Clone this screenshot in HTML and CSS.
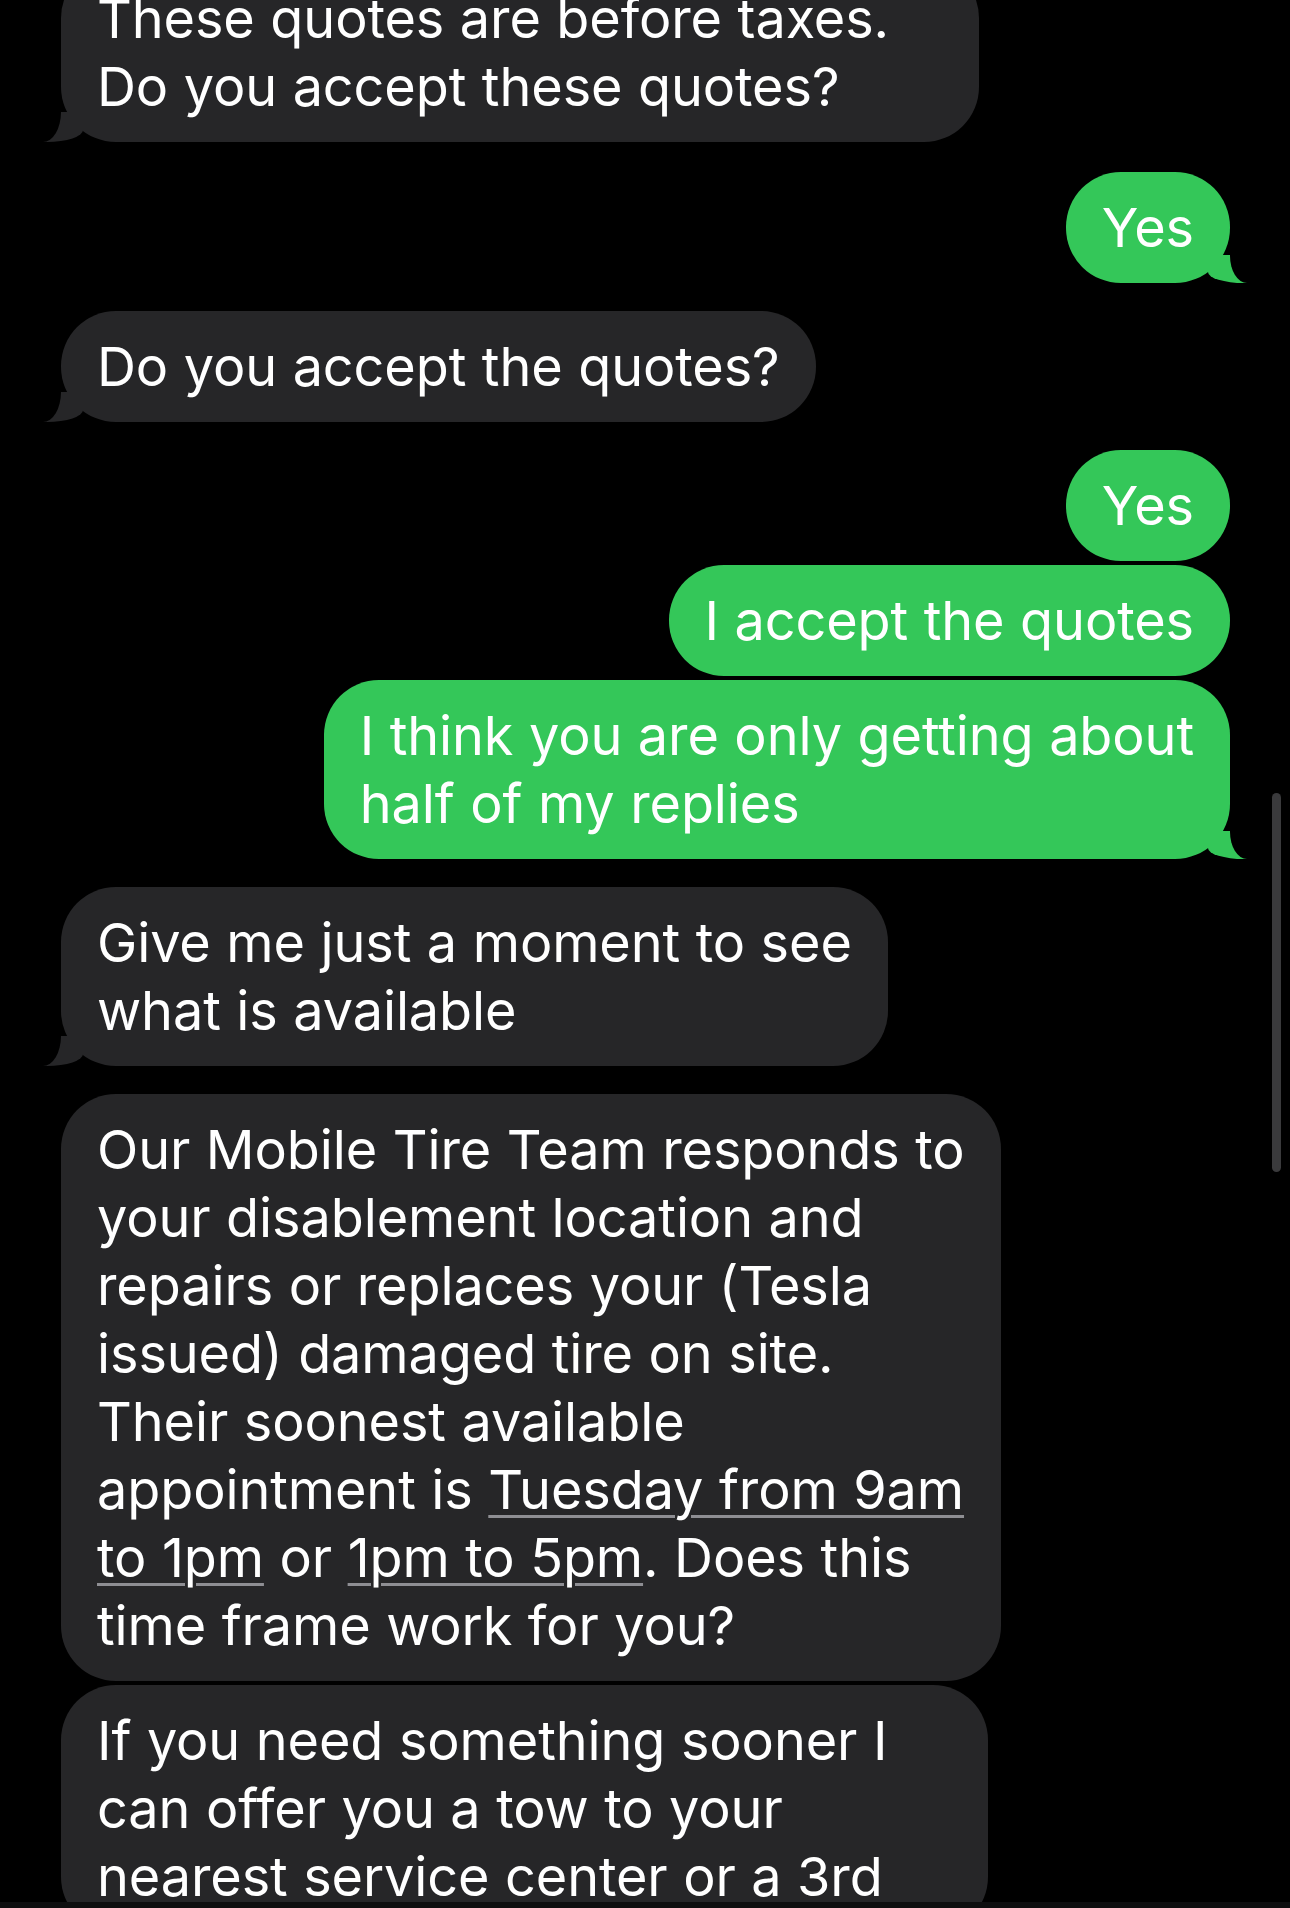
FILE: index.html
```html
<!DOCTYPE html>
<html lang="en">
<head>
<meta charset="utf-8">
<title>Messages</title>
<link rel="stylesheet" href="styles.css">
</head>
<body>
<main class="thread">
  <div class="msg recv tail wide">These quotes are before taxes.<br>Do you accept these quotes?</div>
  <div class="msg sent tail first">Yes</div>
  <div class="msg recv tail new">Do you accept the quotes?</div>
  <div class="msg sent new">Yes</div>
  <div class="msg sent">I accept the quotes</div>
  <div class="msg sent tail">I think you are only getting about<br>half of my replies</div>
  <div class="msg recv tail new">Give me just a moment to see<br>what is available</div>
  <div class="msg recv new">Our Mobile Tire Team responds to<br>your disablement location and<br>repairs or replaces your (Tesla<br>issued) damaged tire on site.<br>Their soonest available<br>appointment is <span class="link">Tuesday from 9am<br>to 1pm</span> or <span class="link">1pm to 5pm</span>. Does this<br>time frame work for you?</div>
  <div class="msg recv wider">If you need something sooner I<br>can offer you a tow to your<br>nearest service center or a 3rd</div>
</main>
<div class="scrollbar"></div>
<div class="bottom-edge"></div>
</body>
</html>
```
FILE: styles.css
```css
html {
  background: #000;
}
body {
  margin: 0;
  height: 1908px;
  overflow: hidden;
  font-family: "Inter", "Noto Sans", sans-serif;
  color: #fff;
}
.thread {
  display: flex;
  flex-direction: column;
  padding: 0 60px 0 61px;
  margin-top: -37px;
}
.msg {
  position: relative;
  z-index: 0;
  box-sizing: border-box;
  font-size: 54px;
  line-height: 68px;
  letter-spacing: -0.1px;
  word-spacing: 0.5px;
  padding: 21.5px 36px;
  border-radius: 55px;
  margin-top: 4px;
  white-space: nowrap;
}
.msg.new {
  margin-top: 28px;
}
.msg.first {
  margin-top: 30px;
}
.thread > .msg:first-child {
  margin-top: 0;
}
.recv {
  align-self: flex-start;
  background: #262628;
}
.sent {
  align-self: flex-end;
  background: #34c759;
}
.wide {
  width: 918px;
}
.wider {
  width: 927px;
}
.tail::before,
.tail::after {
  content: "";
  position: absolute;
  bottom: 0;
  z-index: -1;
}
.recv.tail::before {
  left: -18px;
  width: 40px;
  height: 30px;
  background: #262628;
  border-bottom-right-radius: 36px 12px;
}
.recv.tail::after {
  left: -60px;
  width: 60px;
  height: 32px;
  background: #000;
  border-bottom-right-radius: 18px 30px;
}
.sent.tail::before {
  right: -17px;
  width: 39px;
  height: 28px;
  background: #34c759;
  border-bottom-left-radius: 36px 11px;
}
.sent.tail::after {
  right: -60px;
  width: 60px;
  height: 30px;
  background: #000;
  border-bottom-left-radius: 17px 27px;
}
.link {
  text-decoration: underline;
  text-decoration-color: #8e8e93;
  text-decoration-thickness: 3px;
  text-underline-offset: 6px;
}
.scrollbar {
  position: absolute;
  left: 1272px;
  top: 793px;
  width: 9px;
  height: 379px;
  border-radius: 5px;
  background: #3a3a3c;
}
.bottom-edge {
  position: absolute;
  left: 0;
  right: 0;
  top: 1902px;
  height: 6px;
  background: #0e0e0f;
}
```
